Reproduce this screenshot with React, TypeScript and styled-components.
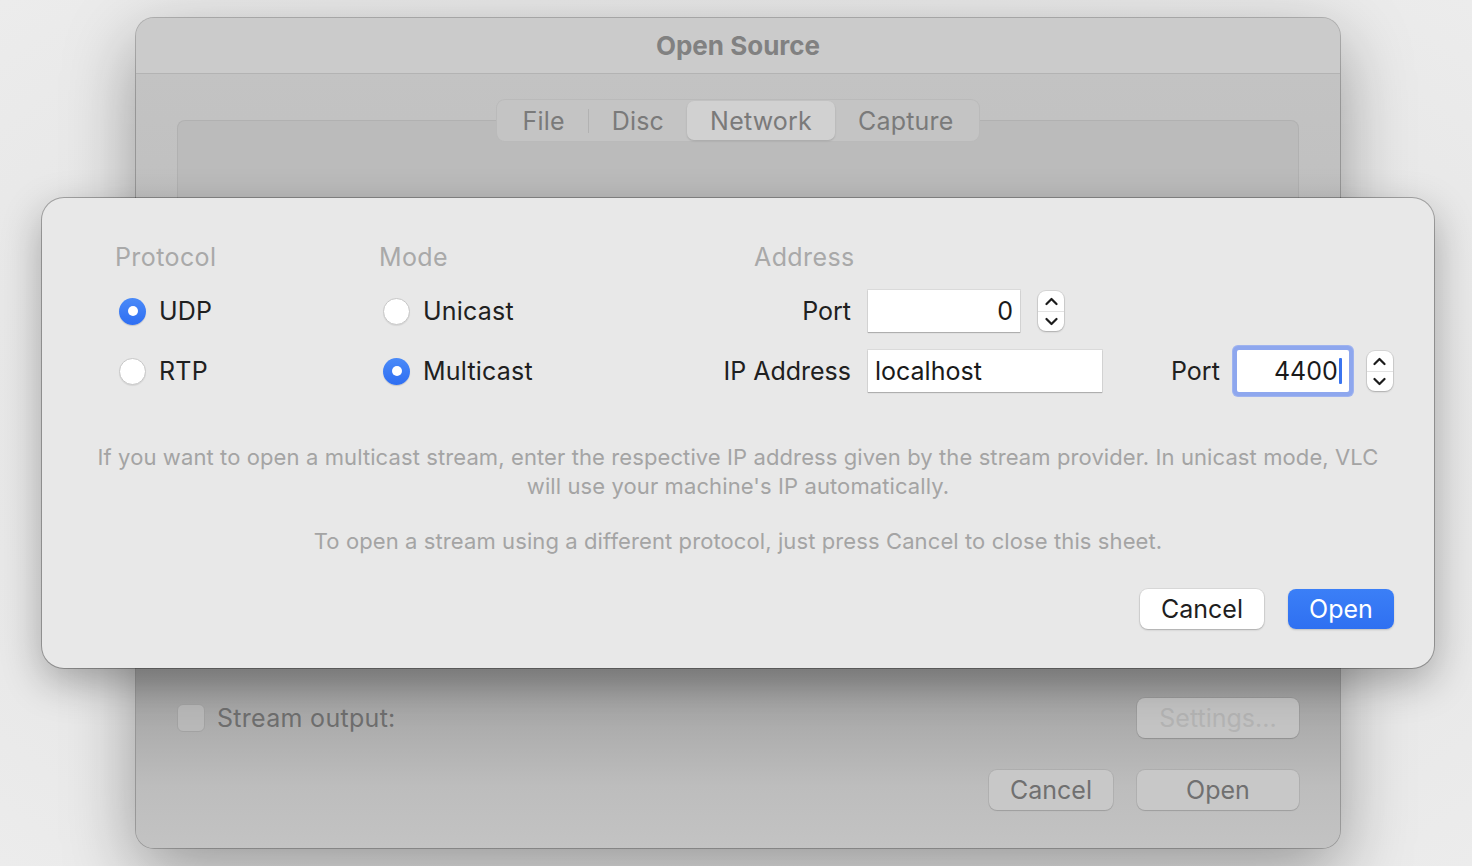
import React from "react";
import styled, { createGlobalStyle } from "styled-components";

const GlobalStyle = createGlobalStyle`
  html, body {
    margin: 0;
    padding: 0;
    background: #e8e8e8;
    font-family: Inter, "Noto Sans", "Liberation Sans", sans-serif;
    -webkit-font-smoothing: antialiased;
  }
`;

const Page = styled.div`
  position: relative;
  width: 1472px;
  height: 866px;
  overflow: hidden;
  background: radial-gradient(ellipse at 50% 50%, #d8d8d8 0%, #e6e6e6 60%, #ececec 100%);
`;

/* --- dimmed parent window --- */

const Window = styled.div`
  position: absolute;
  left: 136px;
  top: 18px;
  width: 1204px;
  height: 830px;
  border-radius: 18px;
  overflow: hidden;
  display: flex;
  flex-direction: column;
  background: #c1c1c1;
  box-shadow: 0 0 0 1px rgba(0, 0, 0, 0.22), 0 24px 70px rgba(0, 0, 0, 0.35);
`;

const TitleBar = styled.div`
  height: 56px;
  flex: none;
  display: flex;
  align-items: center;
  justify-content: center;
  background: #cbcbcb;
  border-bottom: 1px solid #b3b3b3;
  box-sizing: border-box;
  font-size: 26px;
  font-weight: 700;
  color: #818181;
`;

const WindowBody = styled.div`
  flex: 1;
  display: flex;
  flex-direction: column;
  padding: 25px 41px 38px;
  background: linear-gradient(180deg, #c3c3c3 0%, #bcbcbc 40%, #9f9f9f 78%, #bdbdbd 92%, #c3c3c3 100%);
`;

const Segmented = styled.div`
  position: relative;
  z-index: 1;
  align-self: center;
  display: flex;
  align-items: center;
  height: 43px;
  padding: 0 3px;
  box-sizing: border-box;
  border-radius: 9px;
  background: #c4c4c4;
  box-shadow: inset 0 0 0 1px rgba(0, 0, 0, 0.05);
`;

const Tab = styled.div<{ $active?: boolean }>`
  height: 39px;
  display: flex;
  align-items: center;
  padding: 0 23px;
  border-radius: 7px;
  font-size: 25px;
  letter-spacing: 0.2px;
  color: #7a7a7a;
  background: ${(p) => (p.$active ? "#d1d1d1" : "transparent")};
  box-shadow: ${(p) => (p.$active ? "0 1px 2px rgba(0,0,0,0.15)" : "none")};
`;

const TabDivider = styled.span`
  width: 1px;
  height: 24px;
  background: #b2b2b2;
`;

const TabBox = styled.div`
  margin-top: -22px;
  height: 540px;
  border-radius: 8px;
  background: #bbbbbb;
  box-shadow: inset 0 0 0 1px rgba(0, 0, 0, 0.05);
`;

const StreamRow = styled.div`
  margin-top: 38px;
  height: 40px;
  display: flex;
  align-items: center;
  justify-content: space-between;
`;

const CheckLabel = styled.label`
  display: flex;
  align-items: center;
  gap: 12px;
  font-size: 25px;
  letter-spacing: 0.3px;
  color: #6e6e6e;
`;

const CheckBox = styled.span`
  width: 28px;
  height: 28px;
  box-sizing: border-box;
  border-radius: 6px;
  border: 1px solid #a2a2a2;
  background: #b8b8b8;
`;

const GreyButton = styled.div<{ $width: number; $disabled?: boolean }>`
  width: ${(p) => p.$width}px;
  height: 40px;
  display: flex;
  align-items: center;
  justify-content: center;
  box-sizing: border-box;
  border-radius: 8px;
  font-size: 25px;
  color: ${(p) => (p.$disabled ? "#b3b3b3" : "#707070")};
  background: ${(p) => (p.$disabled ? "#c3c3c3" : "#c8c8c8")};
  box-shadow: 0 0 0 1px rgba(0, 0, 0, 0.06), 0 1px 1px rgba(0, 0, 0, 0.12);
`;

const WindowButtons = styled.div`
  margin-top: 32px;
  display: flex;
  justify-content: flex-end;
  gap: 24px;
`;

/* --- network sheet --- */

const Sheet = styled.div`
  position: absolute;
  left: 42px;
  top: 198px;
  width: 1392px;
  height: 470px;
  box-sizing: border-box;
  padding: 44px 40px 0 73px;
  border-radius: 22px;
  background: #e8e8e8;
  box-shadow: 0 0 0 1px rgba(0, 0, 0, 0.28), 0 14px 40px rgba(0, 0, 0, 0.3);
  display: flex;
  flex-direction: column;
`;

const Form = styled.div`
  display: flex;
`;

const Column = styled.div<{ $width?: number }>`
  width: ${(p) => (p.$width ? `${p.$width}px` : "auto")};
  flex: none;
  display: flex;
  flex-direction: column;
`;

const Heading = styled.div<{ $indent?: number }>`
  height: 30px;
  line-height: 30px;
  margin-bottom: 9px;
  padding-left: ${(p) => p.$indent || 0}px;
  font-size: 25px;
  letter-spacing: 0.4px;
  color: #a9a9a9;
`;

const Row = styled.div`
  height: 60px;
  display: flex;
  align-items: center;

  & > * {
    flex-shrink: 0;
  }
`;

const RadioItem = styled.label`
  display: flex;
  align-items: center;
  gap: 13px;
  padding-left: 4px;
  font-size: 25px;
  letter-spacing: 0.2px;
  color: #202020;
`;

const RadioDot = styled.span<{ $on?: boolean }>`
  width: 27px;
  height: 27px;
  box-sizing: border-box;
  border-radius: 50%;
  display: flex;
  align-items: center;
  justify-content: center;
  background: ${(p) => (p.$on ? "linear-gradient(180deg, #4a8af8, #2e6ef2)" : "#ffffff")};
  border: ${(p) => (p.$on ? "none" : "1px solid #c7c7c7")};
  box-shadow: ${(p) => (p.$on ? "0 1px 1px rgba(0,0,0,0.15)" : "0 1px 1px rgba(0,0,0,0.08)")};

  &::after {
    content: "";
    display: ${(p) => (p.$on ? "block" : "none")};
    width: 10px;
    height: 10px;
    border-radius: 50%;
    background: #ffffff;
  }
`;

const FieldLabel = styled.span<{ $width?: number; $gap?: number }>`
  width: ${(p) => (p.$width ? `${p.$width}px` : "auto")};
  margin-left: ${(p) => p.$gap || 0}px;
  margin-right: 17px;
  text-align: right;
  font-size: 25px;
  color: #202020;
`;

const Field = styled.div<{ $width: number; $align?: string; $focus?: boolean }>`
  width: ${(p) => p.$width}px;
  height: 42px;
  box-sizing: border-box;
  display: flex;
  align-items: center;
  justify-content: ${(p) => (p.$align === "right" ? "flex-end" : "flex-start")};
  padding: 0 7px;
  background: #ffffff;
  font-size: 25px;
  color: #1a1a1a;
  box-shadow: ${(p) =>
    p.$focus
      ? "0 0 0 4px #8ea7ee, 0 0 0 5px #9fb3ef"
      : "0 0 0 1px rgba(0,0,0,0.06), 0 1px 1px rgba(0,0,0,0.2)"};
  border-radius: ${(p) => (p.$focus ? "2px" : "0")};
`;

const Caret = styled.span`
  width: 3px;
  height: 26px;
  margin-left: 1px;
  background: #3a74ef;
  border-radius: 1px;
`;

const StepperBox = styled.div<{ $gap: number }>`
  margin-left: ${(p) => p.$gap}px;
  width: 26px;
  height: 40px;
  box-sizing: border-box;
  border-radius: 8px;
  background: #ffffff;
  box-shadow: 0 0 0 1px rgba(0, 0, 0, 0.08), 0 1px 2px rgba(0, 0, 0, 0.2);
  display: flex;
  flex-direction: column;
  align-items: center;
  justify-content: space-around;
  position: relative;

  &::before {
    content: "";
    position: absolute;
    left: 0;
    right: 0;
    top: 50%;
    height: 1px;
    background: #e2e2e2;
  }
`;

const Help = styled.p<{ $top: number }>`
  margin: ${(p) => p.$top}px 0 0 -73px;
  width: 1392px;
  text-align: center;
  font-size: 22px;
  letter-spacing: 0.1px;
  line-height: 29px;
  color: #a4a4a4;
`;

const SheetButtons = styled.div`
  margin-top: 33px;
  display: flex;
  justify-content: flex-end;
  gap: 24px;
`;

const PushButton = styled.div<{ $width: number; $primary?: boolean }>`
  width: ${(p) => p.$width}px;
  height: 40px;
  box-sizing: border-box;
  display: flex;
  align-items: center;
  justify-content: center;
  border-radius: 8px;
  font-size: 25px;
  color: ${(p) => (p.$primary ? "#ffffff" : "#1e1e1e")};
  background: ${(p) => (p.$primary ? "linear-gradient(180deg, #3b7ff7, #2f70f1)" : "#ffffff")};
  box-shadow: ${(p) =>
    p.$primary
      ? "0 1px 2px rgba(0,0,0,0.18)"
      : "0 0 0 1px rgba(0,0,0,0.06), 0 1px 2px rgba(0,0,0,0.22)"};
`;

const Chevron = ({ up }: { up?: boolean }) => (
  <svg width="13" height="9" viewBox="0 0 13 9">
    <path
      d={up ? "M1.5 7 L6.5 2 L11.5 7" : "M1.5 2 L6.5 7 L11.5 2"}
      fill="none"
      stroke="#1c1c1c"
      strokeWidth="2.2"
      strokeLinecap="round"
      strokeLinejoin="round"
    />
  </svg>
);

const Stepper = ({ gap }: { gap: number }) => (
  <StepperBox $gap={gap}>
    <Chevron up />
    <Chevron />
  </StepperBox>
);

const Radio = ({ on, children }: { on?: boolean; children: React.ReactNode }) => (
  <RadioItem>
    <RadioDot $on={on} />
    {children}
  </RadioItem>
);

export default function App() {
  return (
    <Page>
      <GlobalStyle />
      <Window>
        <TitleBar>Open Source</TitleBar>
        <WindowBody>
          <Segmented>
            <Tab>File</Tab>
            <TabDivider />
            <Tab>Disc</Tab>
            <Tab $active>Network</Tab>
            <Tab>Capture</Tab>
          </Segmented>
          <TabBox />
          <StreamRow>
            <CheckLabel>
              <CheckBox />
              Stream output:
            </CheckLabel>
            <GreyButton $width={162} $disabled>
              Settings...
            </GreyButton>
          </StreamRow>
          <WindowButtons>
            <GreyButton $width={124}>Cancel</GreyButton>
            <GreyButton $width={162}>Open</GreyButton>
          </WindowButtons>
        </WindowBody>
      </Window>

      <Sheet>
        <Form>
          <Column $width={264}>
            <Heading>Protocol</Heading>
            <Row>
              <Radio on>UDP</Radio>
            </Row>
            <Row>
              <Radio>RTP</Radio>
            </Row>
          </Column>
          <Column $width={344}>
            <Heading>Mode</Heading>
            <Row>
              <Radio>Unicast</Radio>
            </Row>
            <Row>
              <Radio on>Multicast</Radio>
            </Row>
          </Column>
          <Column>
            <Heading $indent={31}>Address</Heading>
            <Row>
              <FieldLabel $width={128}>Port</FieldLabel>
              <Field $width={152} $align="right">
                0
              </Field>
              <Stepper gap={18} />
            </Row>
            <Row>
              <FieldLabel $width={128}>IP Address</FieldLabel>
              <Field $width={234}>localhost</Field>
              <FieldLabel $gap={69}>Port</FieldLabel>
              <Field $width={112} $align="right" $focus>
                4400
                <Caret />
              </Field>
              <Stepper gap={18} />
            </Row>
          </Column>
        </Form>
        <Help $top={42}>
          If you want to open a multicast stream, enter the respective IP address given by the stream provider. In unicast mode, VLC
          <br />
          will use your machine's IP automatically.
        </Help>
        <Help $top={26}>To open a stream using a different protocol, just press Cancel to close this sheet.</Help>
        <SheetButtons>
          <PushButton $width={124}>Cancel</PushButton>
          <PushButton $width={106} $primary>
            Open
          </PushButton>
        </SheetButtons>
      </Sheet>
    </Page>
  );
}
